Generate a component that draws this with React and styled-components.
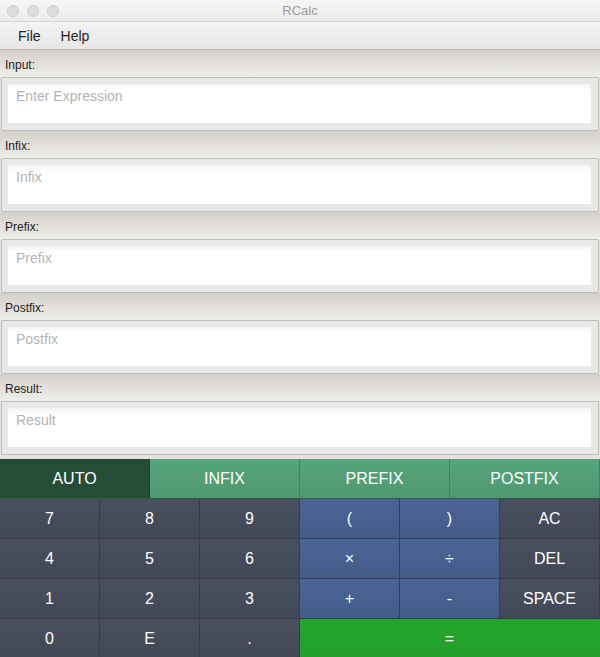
import React from "react";
import styled, { createGlobalStyle } from "styled-components";

const GlobalStyle = createGlobalStyle`
  html, body {
    margin: 0;
    padding: 0;
    background: #e6e3df;
    font-family: "Liberation Sans", Arial, sans-serif;
  }
  * { box-sizing: border-box; }
`;

const fields = [
  { label: "Input:", placeholder: "Enter Expression" },
  { label: "Infix:", placeholder: "Infix" },
  { label: "Prefix:", placeholder: "Prefix" },
  { label: "Postfix:", placeholder: "Postfix" },
  { label: "Result:", placeholder: "Result" },
];

const modes = ["AUTO", "INFIX", "PREFIX", "POSTFIX"];

const keys = [
  ["7", "num"], ["8", "num"], ["9", "num"], ["(", "op"], [")", "op"], ["AC", "num"],
  ["4", "num"], ["5", "num"], ["6", "num"], ["×", "op"], ["÷", "op"], ["DEL", "num"],
  ["1", "num"], ["2", "num"], ["3", "num"], ["+", "op"], ["-", "op"], ["SPACE", "num"],
  ["0", "num"], ["E", "num"], [".", "num"], ["=", "eq"],
];

const App = () => {
  return (
    <Window>
      <GlobalStyle />
      <TitleBar>
        <Lights>
          <Light />
          <Light />
          <Light />
        </Lights>
        <Title>RCalc</Title>
      </TitleBar>
      <MenuBar>
        <MenuItem>File</MenuItem>
        <MenuItem>Help</MenuItem>
      </MenuBar>
      {fields.map((f) => (
        <Section key={f.label}>
          <LabelBar>{f.label}</LabelBar>
          <FieldFrame>
            <FieldInput placeholder={f.placeholder} readOnly />
          </FieldFrame>
        </Section>
      ))}
      <ModeRow>
        {modes.map((m, i) => (
          <ModeButton key={m} active={i === 0}>
            {m}
          </ModeButton>
        ))}
      </ModeRow>
      <Keypad>
        {keys.map(([k, kind]) => (
          <Key key={k} kind={kind}>
            {k}
          </Key>
        ))}
      </Keypad>
    </Window>
  );
};

const Window = styled.div`
  width: 600px;
  height: 657px;
  display: flex;
  flex-direction: column;
  overflow: hidden;
  background: #e6e3df;
`;

const TitleBar = styled.div`
  height: 22px;
  flex-shrink: 0;
  position: relative;
  display: flex;
  align-items: center;
  justify-content: center;
  background: linear-gradient(#f6f6f6, #ececec);
  border-bottom: 1px solid #d4d4d4;
`;

const Lights = styled.div`
  position: absolute;
  left: 7px;
  top: 5px;
  display: flex;
  gap: 8px;
`;

const Light = styled.span`
  width: 12px;
  height: 12px;
  border-radius: 50%;
  background: #dcdcdc;
  border: 1px solid #cfcfcf;
`;

const Title = styled.div`
  font-size: 13px;
  color: #9c9c9c;
`;

const MenuBar = styled.div`
  height: 28px;
  flex-shrink: 0;
  display: flex;
  align-items: center;
  gap: 20px;
  padding: 0 0 0 18px;
  background: linear-gradient(#f4f4f4, #e6e6e6);
  border-bottom: 1px solid #b9b9b9;
`;

const MenuItem = styled.span`
  font-size: 14px;
  color: #1f1f1f;
`;

const Section = styled.div`
  display: flex;
  flex-direction: column;
  flex-shrink: 0;
`;

const LabelBar = styled.div`
  height: 27px;
  padding: 8px 0 0 5px;
  font-size: 12px;
  color: #222;
  background: linear-gradient(#d4d1cb, #f0eeea);
`;

const FieldFrame = styled.div`
  height: 54px;
  margin: 0 1px;
  padding: 6px 7px 7px 6px;
  background: #e8e8e8;
  border: 1px solid #bdbdbd;
  border-radius: 2px;
`;

const FieldInput = styled.input`
  width: 100%;
  height: 100%;
  border: none;
  outline: none;
  padding: 0 0 15px 8px;
  background: linear-gradient(#f2f2f2, #ffffff 6px);
  font-family: "Liberation Sans", Arial, sans-serif;
  font-size: 14px;
  color: #333;

  &::placeholder {
    color: #b3b3b3;
  }
`;

const ModeRow = styled.div`
  display: grid;
  grid-template-columns: repeat(4, 1fr);
  flex-shrink: 0;
  height: 40px;
  margin-top: 4px;
`;

const ModeButton = styled.div`
  display: flex;
  align-items: center;
  justify-content: center;
  font-size: 16px;
  color: #fff;
  background: ${(p) => (p.active ? "#244c37" : "linear-gradient(#56a57c, #4f9872)")};
  border-right: 1px solid ${(p) => (p.active ? "#1d3f2d" : "#3f8460")};
  border-bottom: 1px solid #2f5a43;
`;

const keyColors = {
  num: ["#4a4f5e", "#434857"],
  op: ["#4a6494", "#445c8a"],
  eq: ["#23a42b", "#22a02a"],
};

const Key = styled.div`
  display: flex;
  align-items: center;
  justify-content: center;
  height: 40px;
  font-size: 16px;
  color: #fff;
  background: linear-gradient(${(p) => keyColors[p.kind][0]}, ${(p) => keyColors[p.kind][1]});
  border-right: 1px solid ${(p) => (p.kind === "eq" ? "transparent" : "#383c48")};
  border-bottom: 1px solid ${(p) => (p.kind === "eq" ? "transparent" : "#383c48")};
  grid-column: ${(p) => (p.kind === "eq" ? "span 3" : "auto")};
`;

const Keypad = styled.div`
  display: grid;
  grid-template-columns: repeat(6, 1fr);
  grid-auto-rows: 40px;
  flex: 1;
  background: #23a42b;
`;

export default App;
